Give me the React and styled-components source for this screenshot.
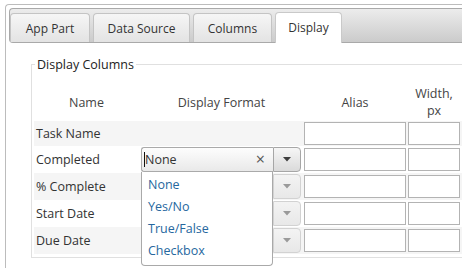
import React from "react";
import styled, { createGlobalStyle } from "styled-components";

const GlobalStyle = createGlobalStyle`
  html, body {
    margin: 0;
    padding: 0;
    background: #fff;
    overflow: hidden;
  }
  body {
    font-family: "Segoe UI", "Open Sans", "Liberation Sans", sans-serif;
    font-size: 12.5px;
    color: #333;
  }
`;

const tabs = [
  { label: "App Part", width: 80 },
  { label: "Data Source", width: 97 },
  { label: "Columns", width: 79 },
  { label: "Display", width: 67 },
];

const rows = [
  { name: "Task Name", select: null },
  { name: "Completed", select: "open" },
  { name: "% Complete", select: "disabled" },
  { name: "Start Date", select: "disabled" },
  { name: "Due Date", select: "disabled" },
];

const options = ["None", "Yes/No", "True/False", "Checkbox"];

const Caret = ({ color }) => (
  <svg width="8" height="5" viewBox="0 0 8 5">
    <path d="M0 0 L8 0 L4 4.5 Z" fill={color} />
  </svg>
);

const FormatSelect = ({ state }) => {
  if (state === "open") {
    return (
      <SelectWrap>
        <SelectInput>
          <Cursor />
          <span>None</span>
          <Clear>×</Clear>
        </SelectInput>
        <SelectButton>
          <Caret color="#3d3d3d" />
        </SelectButton>
        <Menu>
          {options.map((o) => (
            <MenuItem key={o}>{o}</MenuItem>
          ))}
        </Menu>
      </SelectWrap>
    );
  }
  return (
    <SelectWrap>
      <SelectInput $disabled />
      <SelectButton $disabled>
        <Caret color="#9a9a9a" />
      </SelectButton>
    </SelectWrap>
  );
};

const App = () => {
  return (
    <>
      <GlobalStyle />
      <Page>
        <Panel>
          <TabBar>
            {tabs.map((t) => (
              <Tab key={t.label} $w={t.width} $active={t.label === "Display"}>
                {t.label}
              </Tab>
            ))}
          </TabBar>
          <Content>
            <Group>
              <Legend>Display Columns</Legend>
              <HeaderRow>
                <HeadCell>Name</HeadCell>
                <HeadCell>Display Format</HeadCell>
                <HeadCell>Alias</HeadCell>
                <HeadCell>
                  Width,
                  <br />
                  px
                </HeadCell>
              </HeaderRow>
              {rows.map((r, i) => (
                <Row key={r.name} $striped={i % 2 === 0}>
                  <NameCell>{r.name}</NameCell>
                  <div>{r.select && <FormatSelect state={r.select} />}</div>
                  <TextInput />
                  <TextInput />
                </Row>
              ))}
            </Group>
          </Content>
        </Panel>
      </Page>
    </>
  );
};

export default App;

const Page = styled.div`
  padding: 4px 0 0 5px;
`;

const Panel = styled.div`
  width: 457px;
  height: 264px;
  border: 1px solid #bcbcbc;
  border-right: none;
  border-bottom: none;
  border-top-left-radius: 4px;
  padding: 3px 0 0 3px;
  box-sizing: border-box;
  overflow: hidden;
`;

const TabBar = styled.div`
  display: flex;
  align-items: flex-end;
  gap: 3px;
  height: 35px;
  box-sizing: border-box;
  border: 1px solid #a9a9a9;
  border-right: none;
  border-radius: 4px 0 0 4px;
  background: linear-gradient(#ececec, #cbcbcb);
`;

const Tab = styled.div`
  box-sizing: border-box;
  width: ${(p) => p.$w}px;
  display: flex;
  align-items: center;
  justify-content: center;
  border: 1px solid ${(p) => (p.$active ? "#c9c9c9" : "#c4c4c4")};
  border-bottom: none;
  border-radius: 4px 4px 0 0;
  margin-bottom: ${(p) => (p.$active ? "-1px" : "0")};
  height: ${(p) => (p.$active ? "31px" : "29px")};
  padding-bottom: ${(p) => (p.$active ? "2px" : "0")};
  background: ${(p) =>
    p.$active ? "#fff" : "linear-gradient(#f6f6f6, #e3e3e3)"};
  color: #333;
  font-size: 12px;
  white-space: nowrap;
`;

const Content = styled.div`
  padding: 13px 0 0 22px;
`;

const Group = styled.fieldset`
  margin: 0;
  width: 460px;
  border: 1px solid #e0e0e0;
  border-right: none;
  padding: 0 0 3px 2px;
`;

const Legend = styled.legend`
  padding: 0 2px;
  margin-left: 1px;
  font-size: 12.5px;
  color: #222;
`;

const Columns = styled.div`
  display: grid;
  grid-template-columns: 105px 161px 102px 52px;
  column-gap: 2px;
  align-items: center;
`;

const HeaderRow = styled(Columns)`
  height: 38px;
  margin-top: 10px;
`;

const HeadCell = styled.div`
  text-align: center;
  line-height: 17px;
  color: #444;
`;

const Row = styled(Columns)`
  padding: 1px 0;
  background: ${(p) => (p.$striped ? "#f5f5f5" : "transparent")};
`;

const NameCell = styled.div`
  padding-left: 2px;
  color: #333;
`;

const TextInput = styled.input`
  box-sizing: border-box;
  width: 100%;
  height: 23px;
  border: 1px solid #b3b3b3;
  background: #fff;
  margin: 0;
  padding: 0 3px;
`;

const SelectWrap = styled.div`
  position: relative;
  display: flex;
  width: 160px;
  height: 25px;
`;

const SelectInput = styled.div`
  position: relative;
  box-sizing: border-box;
  width: 132px;
  height: 25px;
  display: flex;
  align-items: center;
  padding-left: 2px;
  border: 1px solid #aaa;
  border-right: none;
  border-radius: 3px 0 0 3px;
  background: ${(p) =>
    p.$disabled ? "#f3f3f3" : "linear-gradient(#fdfdfd, #e9e9e9)"};
  color: #333;
`;

const Cursor = styled.span`
  width: 1px;
  height: 15px;
  background: #111;
`;

const Clear = styled.span`
  position: absolute;
  right: 8px;
  top: 3px;
  font-size: 16px;
  line-height: 16px;
  color: #555;
`;

const SelectButton = styled.div`
  box-sizing: border-box;
  width: 28px;
  height: 25px;
  display: flex;
  align-items: center;
  justify-content: center;
  border: 1px solid ${(p) => (p.$disabled ? "#d2d2d2" : "#a6a6a6")};
  border-radius: 0 4px 4px 0;
  background: ${(p) =>
    p.$disabled
      ? "linear-gradient(#f3f3f3, #e8e8e8)"
      : "linear-gradient(#f6f6f6, #dadada)"};
`;

const Menu = styled.div`
  position: absolute;
  top: 100%;
  left: 0;
  z-index: 2;
  box-sizing: border-box;
  width: 132px;
  height: 94px;
  padding: 2px 0 3px;
  background: #fff;
  border: 1px solid #a9a9a9;
  border-top: none;
  border-radius: 0 0 4px 4px;
`;

const MenuItem = styled.div`
  padding: 0 6px;
  line-height: 22px;
  color: #26679e;
`;
